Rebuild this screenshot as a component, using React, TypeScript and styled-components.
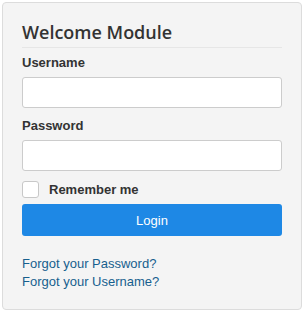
import styled, { createGlobalStyle } from 'styled-components';

const GlobalStyle = createGlobalStyle`
  * { box-sizing: border-box; }
  body {
    margin: 0;
    background: #fff;
    font-family: "Liberation Sans", Arial, sans-serif;
  }
`;

const Page = styled.div`
  padding: 2px;
  width: 304px;
`;

const Card = styled.div`
  width: 300px;
  border: 1px solid #dcdcdc;
  border-radius: 4px;
  background: #f4f4f4;
  padding: 17px 19px 18px;
`;

const Title = styled.h3`
  margin: 0;
  padding-bottom: 3px;
  border-bottom: 1px solid #e6e6e6;
  font-family: "Open Sans", sans-serif;
  font-size: 18px;
  font-weight: 600;
  line-height: 24px;
  color: #333;
`;

const Form = styled.form`
  display: flex;
  flex-direction: column;
  margin-top: 6px;
`;

const Label = styled.label`
  display: block;
  font-size: 13px;
  font-weight: 700;
  line-height: 18px;
  color: #333;
  margin-bottom: 5px;
`;

const Field = styled.div`
  margin-bottom: 9px;
`;

const Input = styled.input`
  display: block;
  width: 100%;
  height: 31px;
  border: 1px solid #cccccc;
  border-radius: 3px;
  background: #fff;
  padding: 4px 6px;
  font-size: 13px;
  outline: none;
`;

const CheckRow = styled.label`
  display: flex;
  align-items: center;
  gap: 10px;
  margin-top: 1px;
  height: 17px;
  font-size: 13px;
  font-weight: 700;
  color: #333;
`;

const Box = styled.span`
  width: 17px;
  height: 17px;
  border: 1px solid #c8c8c8;
  border-radius: 3px;
  background: #fff;
`;

const Button = styled.button`
  margin-top: 6px;
  height: 32px;
  border: none;
  border-radius: 3px;
  background: #1e88e5;
  color: #fff;
  font-family: "Liberation Sans", Arial, sans-serif;
  font-size: 13px;
`;

const Links = styled.div`
  display: flex;
  flex-direction: column;
  margin-top: 19px;
`;

const Link = styled.a`
  font-size: 13px;
  line-height: 18px;
  color: #175f8e;
  text-decoration: none;
`;

export default function App() {
  return (
    <Page>
      <GlobalStyle />
      <Card>
        <Title>Welcome Module</Title>
        <Form onSubmit={(e) => e.preventDefault()}>
          <Field>
            <Label>Username</Label>
            <Input type="text" />
          </Field>
          <Field>
            <Label>Password</Label>
            <Input type="password" />
          </Field>
          <CheckRow>
            <Box />
            Remember me
          </CheckRow>
          <Button type="submit">Login</Button>
        </Form>
        <Links>
          <Link href="#">Forgot your Password?</Link>
          <Link href="#">Forgot your Username?</Link>
        </Links>
      </Card>
    </Page>
  );
}
